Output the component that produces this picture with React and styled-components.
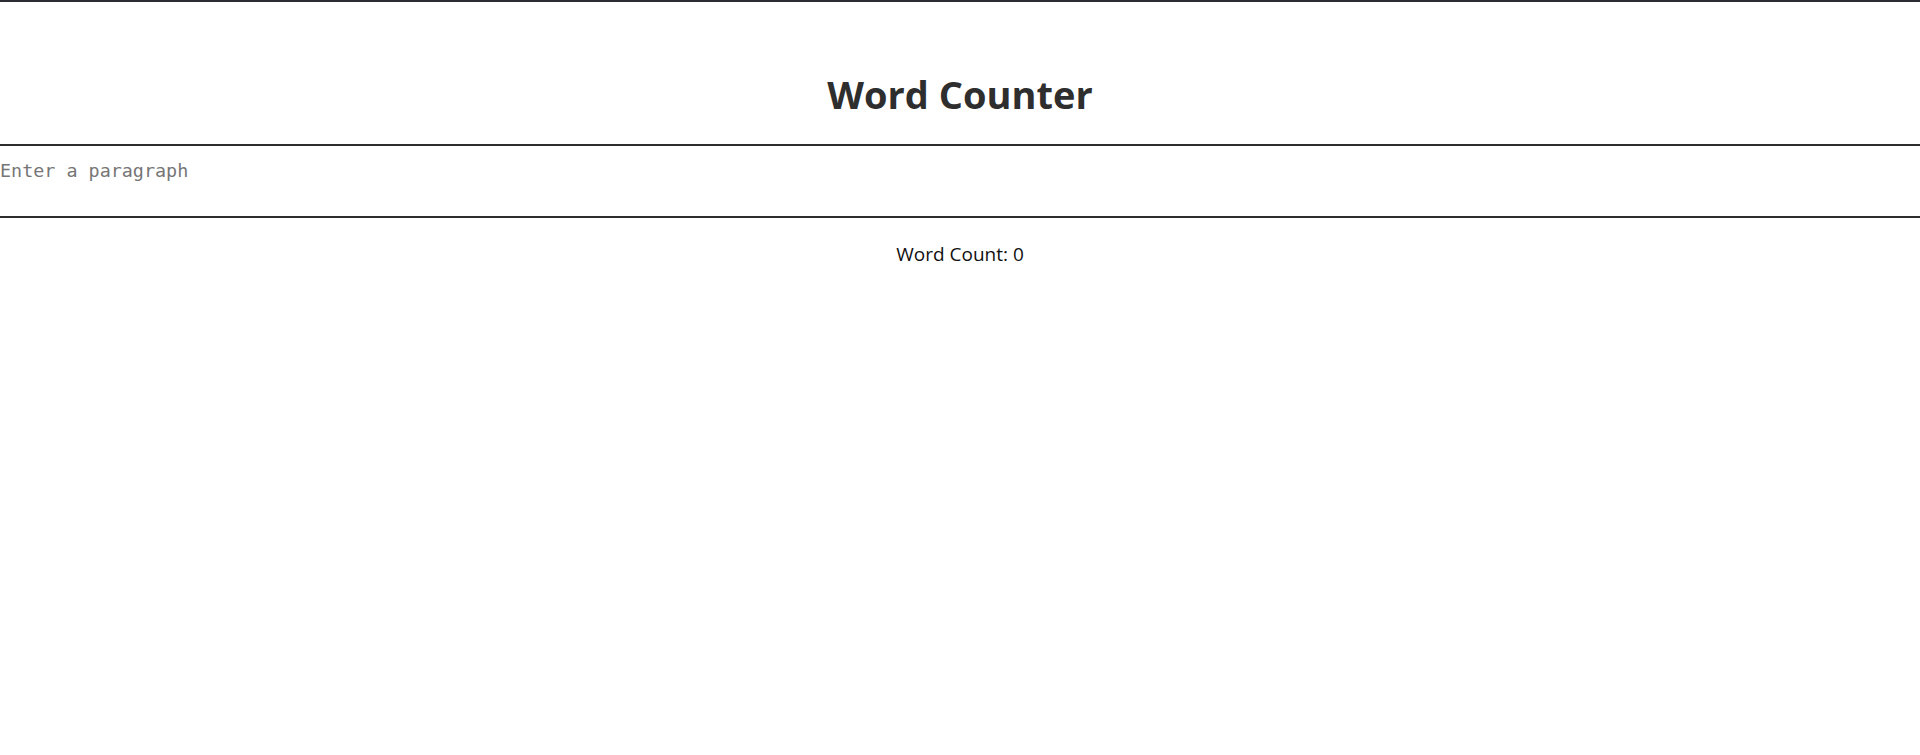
import React, { useState } from "react";
import styled, { createGlobalStyle } from "styled-components";

const GlobalStyle = createGlobalStyle`
  html, body {
    margin: 0;
    padding: 0;
    background: #fff;
  }
  body {
    font-family: "Open Sans", "Noto Sans", sans-serif;
    color: #111;
  }
`;

const Page = styled.div`
  border-top: 2px solid #2b2b33;
`;

const Title = styled.h1`
  margin: 0;
  padding: 66px 0 23px;
  text-align: center;
  font-size: 38px;
  font-weight: 700;
  line-height: 1.4;
  color: #2e2e2e;
`;

const Paragraph = styled.textarea`
  display: block;
  box-sizing: border-box;
  width: 100%;
  height: 74px;
  margin: 0;
  padding: 14px 0 0;
  border: none;
  border-top: 2px solid #2e2e2e;
  border-bottom: 2px solid #2e2e2e;
  font-family: "DejaVu Sans Mono", "Liberation Mono", monospace;
  font-size: 18.4px;
  color: #222;
  resize: none;
  outline: none;

  &::placeholder {
    color: #767676;
  }
`;

const Count = styled.p`
  margin: 23px 0 0;
  text-align: center;
  font-size: 19px;
  color: #111;
`;

export default function App() {
  const [text, setText] = useState("");
  const words = text.trim() ? text.trim().split(/\s+/).length : 0;

  return (
    <Page>
      <GlobalStyle />
      <Title>Word Counter</Title>
      <Paragraph
        placeholder="Enter a paragraph"
        value={text}
        onChange={(e) => setText(e.target.value)}
      />
      <Count>Word Count: {words}</Count>
    </Page>
  );
}
